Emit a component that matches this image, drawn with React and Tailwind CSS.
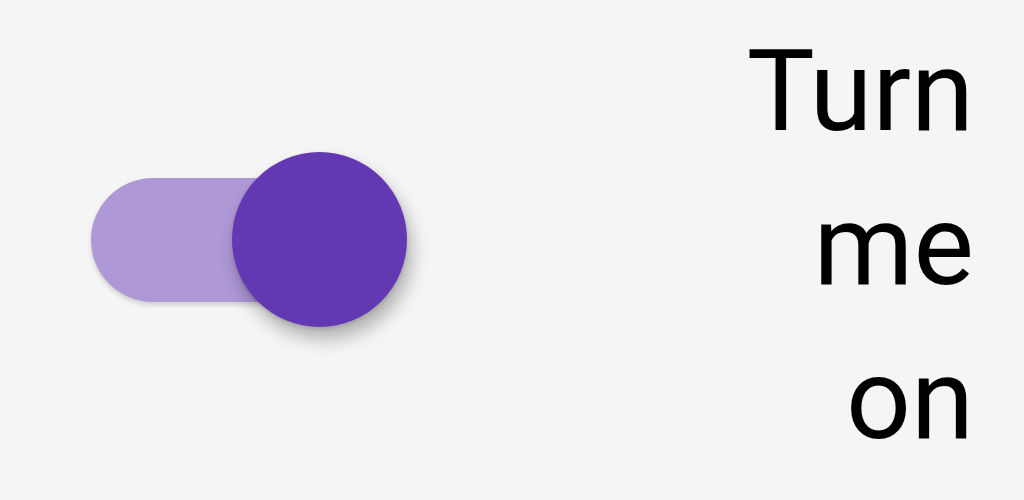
import React from 'react';

export default function App() {
    return (
        <div className="w-full h-[500px] bg-[#f5f5f5] flex items-start overflow-hidden">
            {/* switch, checked */}
            <div className="pl-[91px] pt-[178px]">
                <div className="relative w-[301px] h-[124px] rounded-full bg-[#ae98d6] shadow-[0_3px_5px_rgba(0,0,0,0.16)]">
                    <div className="absolute left-[141px] top-[-26px] w-[175px] h-[175px] rounded-full bg-[#6239b3] shadow-[5px_12px_18px_rgba(0,0,0,0.28),0_2px_4px_rgba(0,0,0,0.12)]" />
                </div>
            </div>

            <div className="ml-auto pr-[50px] pt-[14px] text-right text-black text-[114px] leading-[154px] font-['Roboto',sans-serif]">
                <div>Turn</div>
                <div>me</div>
                <div>on</div>
            </div>
        </div>
    );
}
